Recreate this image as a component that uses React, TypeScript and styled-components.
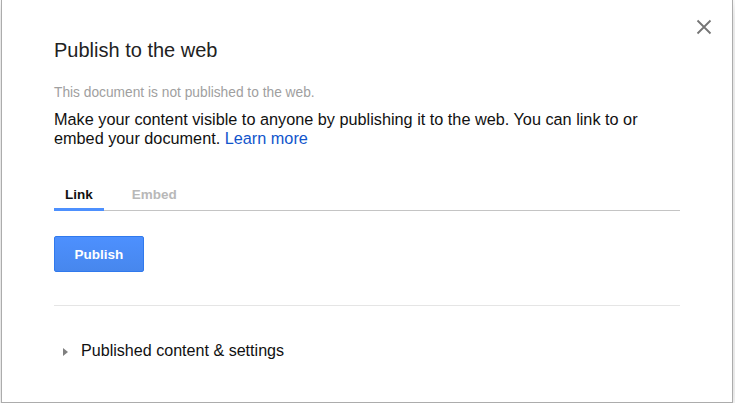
import React from "react";
import styled, { createGlobalStyle } from "styled-components";

const GlobalStyle = createGlobalStyle`
  html, body {
    margin: 0;
    padding: 0;
    background: #ffffff;
    font-family: "Liberation Sans", Arial, sans-serif;
  }
`;

const Dialog = styled.div`
  position: relative;
  box-sizing: border-box;
  margin-left: 1px;
  width: 732px;
  height: 403px;
  background: #fff;
  border: 1px solid #acacac;
  border-top: none;
  box-shadow: 0 4px 16px rgba(0, 0, 0, 0.2);
  padding: 38px 52px 0 52px;
  overflow: hidden;
`;

const CloseButton = styled.button`
  position: absolute;
  top: 19px;
  right: 20px;
  width: 16px;
  height: 16px;
  padding: 0;
  border: none;
  background: transparent;
  cursor: pointer;
  display: flex;
`;

const Title = styled.h1`
  margin: 0;
  font-size: 20px;
  line-height: 24px;
  font-weight: normal;
  color: #222;
`;

const Status = styled.div`
  margin-top: 22px;
  font-size: 13.75px;
  line-height: 17px;
  color: #a0a0a0;
`;

const Description = styled.p`
  margin: 9px 0 0;
  font-size: 16.25px;
  line-height: 19px;
  color: #111;
`;

const LearnMore = styled.a`
  color: #1155cc;
  text-decoration: none;
`;

const TabBar = styled.div`
  margin-top: 39px;
  display: flex;
  border-bottom: 1px solid #c4c4c4;
`;

const Tab = styled.div<{ $active?: boolean }>`
  padding: 0 11px 5px;
  margin-right: 17px;
  margin-bottom: -1px;
  font-size: 13.5px;
  line-height: 16px;
  font-weight: bold;
  color: ${(p) => (p.$active ? "#111" : "#b8b8b8")};
  border-bottom: 3px solid ${(p) => (p.$active ? "#4d90fe" : "transparent")};
`;

const PublishButton = styled.button`
  margin-top: 25px;
  box-sizing: border-box;
  width: 90px;
  height: 36px;
  border: 1px solid #3079ed;
  border-radius: 2px;
  background: linear-gradient(#4d90fe, #4787ed);
  color: #fff;
  font-family: "Liberation Sans", Arial, sans-serif;
  font-size: 13.5px;
  font-weight: bold;
  cursor: pointer;
`;

const Separator = styled.div`
  margin-top: 33px;
  height: 1px;
  background: #e5e5e5;
`;

const Expander = styled.div`
  margin-top: 35px;
  display: flex;
  align-items: center;
  padding-left: 9px;
  gap: 13px;
  font-size: 16.1px;
  line-height: 18px;
  color: #111;
  cursor: pointer;
`;

const Triangle = styled.span`
  width: 0;
  height: 0;
  margin-top: 3px;
  border-left: 5px solid #808080;
  border-top: 4px solid transparent;
  border-bottom: 4px solid transparent;
`;

export default function App() {
  return (
    <>
      <GlobalStyle />
      <Dialog>
        <CloseButton aria-label="Close">
          <svg width="16" height="16" viewBox="0 0 16 16">
            <path d="M1.5 1.5 L14.5 14.5 M14.5 1.5 L1.5 14.5" stroke="#757575" strokeWidth="1.8" fill="none" />
          </svg>
        </CloseButton>
        <Title>Publish to the web</Title>
        <Status>This document is not published to the web.</Status>
        <Description>
          Make your content visible to anyone by publishing it to the web. You can link to or embed your
          document. <LearnMore href="#">Learn more</LearnMore>
        </Description>
        <TabBar>
          <Tab $active>Link</Tab>
          <Tab>Embed</Tab>
        </TabBar>
        <PublishButton>Publish</PublishButton>
        <Separator />
        <Expander>
          <Triangle />
          Published content &amp; settings
        </Expander>
      </Dialog>
    </>
  );
}
